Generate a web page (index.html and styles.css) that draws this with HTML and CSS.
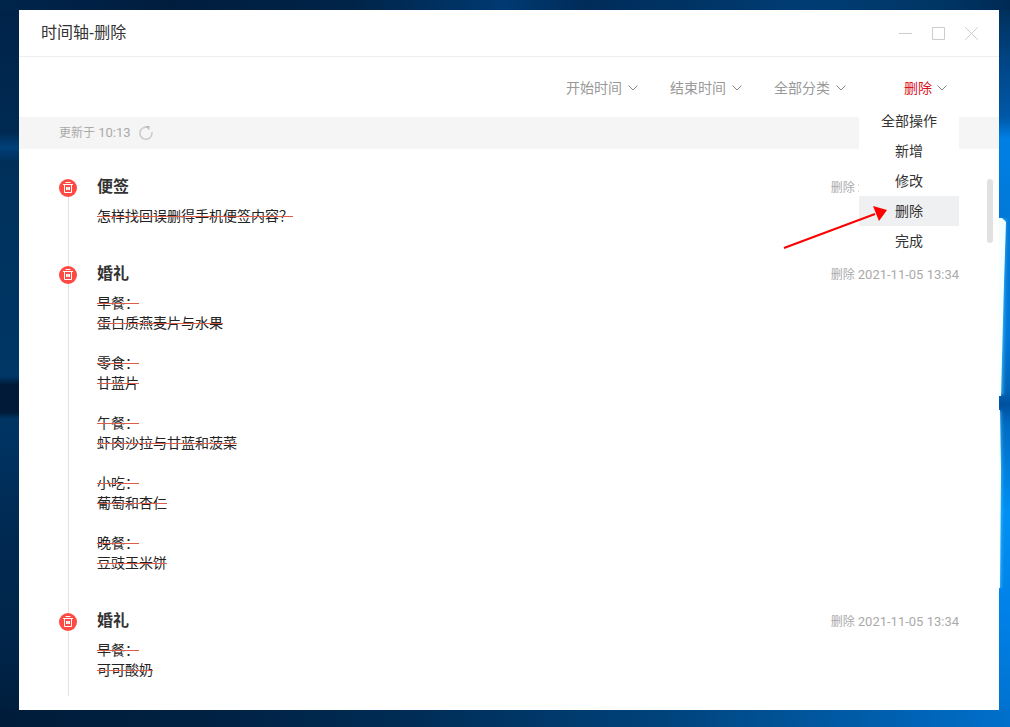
FILE: index.html
```html
<!DOCTYPE html>
<html lang="zh-CN">
<head>
<meta charset="utf-8">
<meta name="viewport" content="width=device-width, initial-scale=1">
<title>时间轴-删除</title>
<link rel="stylesheet" href="styles.css">
</head>
<body>
<svg class="wallpaper" viewBox="0 0 1010 727" preserveAspectRatio="none" aria-hidden="true">
  <defs>
    <linearGradient id="top">
      <stop offset="0" stop-color="#00254b"/><stop offset=".17" stop-color="#001d3e"/><stop offset=".35" stop-color="#002448"/>
      <stop offset=".5" stop-color="#003a72"/><stop offset=".58" stop-color="#002c58"/><stop offset=".8" stop-color="#003d74"/>
      <stop offset=".93" stop-color="#003665"/><stop offset="1" stop-color="#002a54"/>
    </linearGradient>
    <linearGradient id="left" x2="0" y2="1">
      <stop offset="0" stop-color="#00234a"/><stop offset=".17" stop-color="#002a52"/><stop offset=".19" stop-color="#00407a"/>
      <stop offset=".21" stop-color="#00305a"/><stop offset=".51" stop-color="#003766"/><stop offset=".522" stop-color="#001a38"/>
      <stop offset=".56" stop-color="#001a38"/><stop offset=".57" stop-color="#003564"/><stop offset=".75" stop-color="#002850"/>
      <stop offset=".89" stop-color="#002549"/><stop offset="1" stop-color="#001c3a"/>
    </linearGradient>
    <linearGradient id="right" x2="0" y2="1">
      <stop offset="0" stop-color="#00305c"/><stop offset=".08" stop-color="#004789"/><stop offset=".15" stop-color="#0058a8"/>
      <stop offset=".18" stop-color="#0080e4"/><stop offset=".3" stop-color="#0078d8"/><stop offset=".45" stop-color="#0078da"/>
      <stop offset=".53" stop-color="#0065b8"/><stop offset=".55" stop-color="#0051a0"/><stop offset=".58" stop-color="#006cc4"/>
      <stop offset=".7" stop-color="#0090f4"/><stop offset=".85" stop-color="#0080e6"/><stop offset="1" stop-color="#0070cc"/>
    </linearGradient>
    <linearGradient id="bottom">
      <stop offset="0" stop-color="#001c3a"/><stop offset=".2" stop-color="#002142"/><stop offset=".4" stop-color="#002c55"/>
      <stop offset=".65" stop-color="#00427a"/><stop offset=".85" stop-color="#005ca8"/><stop offset="1" stop-color="#0070cc"/>
    </linearGradient>
    <filter id="glow" x="-3" width="7"><feGaussianBlur stdDeviation="2 1"/></filter>
  </defs>
  <rect width="1010" height="12" fill="url(#top)"/>
  <rect y="11" width="20" height="716" fill="url(#left)"/>
  <rect x="998" y="10" width="12" height="717" fill="url(#right)"/>
  <rect y="709" width="1010" height="18" fill="url(#bottom)"/>
  <path d="M996 219h9l-3 176h-6zM996 411h4l1 60-1 117h-4z" fill="#5cf" filter="url(#glow)"/>
  <path d="M996 218h6l4 4-2 60-3 114h-5zM996 410h4l1 60-1 118h-4z" fill="#f2ffff"/>
</svg>

<main class="window">
  <header class="titlebar">
    <h1 class="titlebar-name">时间轴-删除</h1>
    <div class="window-controls">
      <button class="window-button" type="button" aria-label="最小化"><svg viewBox="0 0 13 13"><path d="M0 6.5h13"/></svg></button>
      <button class="window-button" type="button" aria-label="最大化"><svg viewBox="0 0 13 13"><path d="M.5.5h12v12H.5z"/></svg></button>
      <button class="window-button" type="button" aria-label="关闭"><svg viewBox="0 0 13 13"><path d="M.3.3l12.4 12.4M12.7.3L.3 12.7"/></svg></button>
    </div>
  </header>

  <div class="toolbar">
    <div class="filters">
      <button class="filter" type="button">开始时间<svg class="chevron" viewBox="0 0 10 6"><path d="M.5.5L5 5 9.5.5"/></svg></button>
      <button class="filter" type="button">结束时间<svg class="chevron" viewBox="0 0 10 6"><path d="M.5.5L5 5 9.5.5"/></svg></button>
      <label class="filter">
        <select class="filter-select" aria-label="分类"><option>全部分类</option></select>
        <svg class="chevron" viewBox="0 0 10 6"><path d="M.5.5L5 5 9.5.5"/></svg>
      </label>
    </div>
    <div class="action">
      <button class="filter filter-active" type="button" aria-haspopup="listbox" aria-expanded="true" aria-controls="action-menu">删除<svg class="chevron" viewBox="0 0 10 6"><path d="M.5.5L5 5 9.5.5"/></svg></button>
      <ul class="menu" id="action-menu" role="listbox" aria-label="操作">
        <li class="menu-item" role="option">全部操作</li>
        <li class="menu-item" role="option">新增</li>
        <li class="menu-item" role="option">修改</li>
        <li class="menu-item menu-item-selected" role="option" aria-selected="true">删除</li>
        <li class="menu-item" role="option">完成</li>
      </ul>
      <svg class="pointer" viewBox="0 0 110 46" aria-hidden="true"><path d="M4 43L95 9" stroke="#f00" stroke-width="2"/><path d="M107 5L93 1l6 15z" fill="#f00"/></svg>
    </div>
  </div>

  <div class="status">
    <span>更新于 <time class="digits">10:13</time></span>
    <button class="refresh" type="button" aria-label="刷新"><svg viewBox="0 0 14 14"><path d="M8.8 1.5A6 6 0 1 0 12.8 6" fill="none" stroke="#ccc" stroke-width="1.6"/><path d="M6.5 0L10.6 0 10.2 4.2z" fill="#bbb"/></svg></button>
  </div>

  <section class="content">
    <ol class="timeline">
      <li class="entry">
        <span class="marker"><svg viewBox="0 0 18 18"><path d="M6.5 3.5h5M4 5.5h10M5.5 5.5v8h7v-8" fill="none" stroke="#fff"/><path d="M7 8h4v3H7z" fill="#fff"/><path d="M9 8v3" stroke="#ff9c96" stroke-width=".7"/></svg></span>
        <div class="entry-body">
          <div class="entry-head"><h2 class="entry-title">便签</h2><span class="stamp">删除 <time class="digits">2021-11-05 13:34</time></span></div>
          <p class="note"><del>怎样找回误删得手机便签内容？</del></p>
        </div>
      </li>
      <li class="entry">
        <span class="marker"><svg viewBox="0 0 18 18"><path d="M6.5 3.5h5M4 5.5h10M5.5 5.5v8h7v-8" fill="none" stroke="#fff"/><path d="M7 8h4v3H7z" fill="#fff"/><path d="M9 8v3" stroke="#ff9c96" stroke-width=".7"/></svg></span>
        <div class="entry-body">
          <div class="entry-head"><h2 class="entry-title">婚礼</h2><span class="stamp">删除 <time class="digits">2021-11-05 13:34</time></span></div>
          <p class="note"><del>早餐：<br>蛋白质燕麦片与水果<br><br>零食：<br>甘蓝片<br><br>午餐：<br>虾肉沙拉与甘蓝和菠菜<br><br>小吃：<br>葡萄和杏仁<br><br>晚餐：<br>豆豉玉米饼</del></p>
        </div>
      </li>
      <li class="entry">
        <span class="marker"><svg viewBox="0 0 18 18"><path d="M6.5 3.5h5M4 5.5h10M5.5 5.5v8h7v-8" fill="none" stroke="#fff"/><path d="M7 8h4v3H7z" fill="#fff"/><path d="M9 8v3" stroke="#ff9c96" stroke-width=".7"/></svg></span>
        <div class="entry-body">
          <div class="entry-head"><h2 class="entry-title">婚礼</h2><span class="stamp">删除 <time class="digits">2021-11-05 13:34</time></span></div>
          <p class="note"><del>早餐：<br>可可酸奶</del></p>
        </div>
      </li>
    </ol>
    <div class="scroll-thumb"></div>
  </section>
</main>
</body>
</html>
```
FILE: styles.css
```css
* {
  box-sizing: border-box;
}

body {
  margin: 0;
  min-height: 100vh;
  padding: 10px 11px 17px 19px;
  display: flex;
  background: #002448;
  color: #333;
  font: 14px/20px "Noto Sans", "Noto Sans CJK SC", sans-serif;
}

h1, h2, p, ol, ul {
  margin: 0;
  padding: 0;
  font-weight: 400;
  list-style: none;
}

button, select {
  margin: 0;
  padding: 0;
  border: 0;
  background: none;
  color: inherit;
  font: inherit;
}

svg {
  display: block;
}

.wallpaper {
  position: fixed;
  inset: 0;
  width: 100%;
  height: 100%;
}

.window {
  position: relative;
  flex: 1;
  min-width: 0;
  display: flex;
  flex-direction: column;
  background: #fff;
}

.titlebar {
  display: flex;
  align-items: center;
  justify-content: space-between;
  padding: 10px 21px 12px 22px;
  border-bottom: 1px solid #eee;
}

.titlebar-name {
  font-size: 16px;
  line-height: 24px;
}

.window-controls {
  display: flex;
  gap: 20px;
  padding-top: 2px;
}

.window-button svg {
  width: 13px;
  height: 13px;
  fill: none;
  stroke: #ccc;
}

.toolbar {
  display: flex;
  justify-content: flex-end;
  align-items: center;
  gap: 13px;
  height: 60px;
  padding-top: 2px;
  padding-right: 40px;
  color: #999;
}

.filters {
  display: flex;
  gap: 32px;
}

.filter {
  display: flex;
  align-items: center;
  gap: 6px;
  white-space: nowrap;
}

.filter-select {
  appearance: none;
}

.filter-active {
  gap: 5px;
  color: #d8141f;
}

.chevron {
  width: 10px;
  height: 6px;
  fill: none;
  stroke: #888;
}

.action {
  position: relative;
  width: 100px;
  display: flex;
  justify-content: flex-end;
  padding-right: 12px;
}

.menu {
  position: absolute;
  z-index: 1;
  top: 28px;
  left: 0;
  width: 100%;
  background: #fff;
  color: #333;
  text-align: center;
}

.menu-item {
  line-height: 30px;
}

.menu-item-selected {
  background: #eff0f2;
}

.pointer {
  position: absolute;
  z-index: 2;
  top: 127px;
  right: 69px;
  width: 110px;
  height: 46px;
}

.status {
  display: flex;
  align-items: center;
  gap: 8px;
  padding: 6px 40px;
  background: #f5f5f5;
  color: #aaa;
  font-size: 12px;
}

.digits {
  font-family: Roboto, sans-serif;
  font-size: 13px;
}

.refresh svg {
  width: 14px;
  height: 14px;
}

.content {
  position: relative;
  flex: 1;
  padding: 28px 40px 14px;
}

.entry {
  position: relative;
  display: flex;
  gap: 20px;
  padding-bottom: 38px;
}

.entry:last-child {
  padding-bottom: 16px;
}

.entry::before {
  content: "";
  position: absolute;
  top: 20px;
  bottom: -2px;
  left: 9px;
  width: 1px;
  background: #e3e3e3;
}

.entry:last-child::before {
  bottom: 0;
}

.marker {
  width: 18px;
  height: 18px;
  margin-top: 2px;
  border-radius: 50%;
  background: #ff4a43;
}

.entry-body {
  flex: 1;
}

.entry-head {
  display: flex;
  justify-content: space-between;
  margin-bottom: 7px;
}

.entry-title {
  font-size: 16px;
  line-height: 18px;
  font-weight: 600;
}

.stamp {
  color: #aaa;
  font-size: 12px;
  line-height: 22px;
}

.note {
  color: #222;
}

.note del {
  text-decoration: line-through 1px #dc5f4c;
}

.scroll-thumb {
  position: absolute;
  top: 30px;
  right: 6px;
  width: 6px;
  height: 64px;
  border-radius: 3px;
  background: #e1e1e1;
}
```
